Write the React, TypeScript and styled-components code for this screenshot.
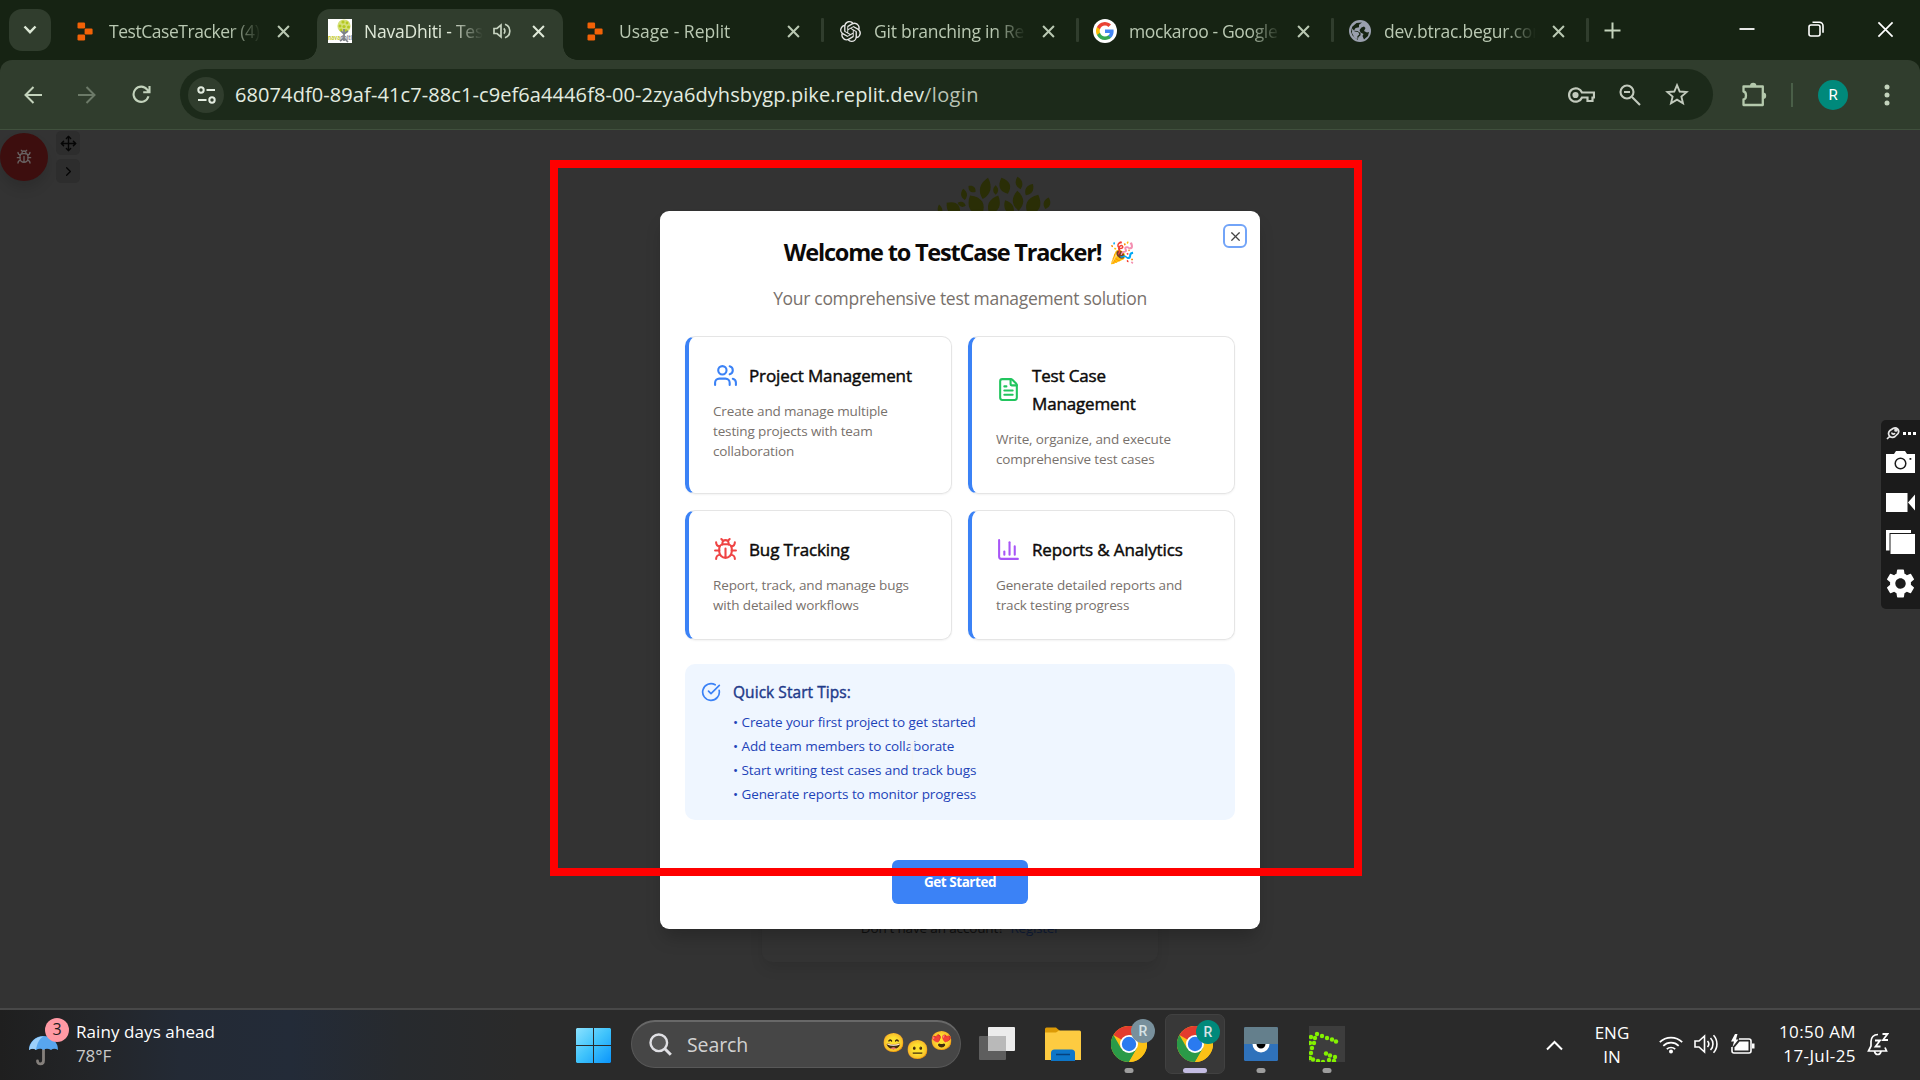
import React from 'react';
import styled, { createGlobalStyle, css } from 'styled-components';
import { Users, FileText, ChartColumn, CircleCheckBig, X, Move, ChevronRight } from 'lucide-react';

const GlobalStyle = createGlobalStyle`
  * { box-sizing: border-box; }
  html, body { margin: 0; padding: 0; background: #333; }
  body { font-family: "Open Sans", "Noto Sans", sans-serif; overflow: hidden; }
  svg { display: block; flex: none; }
`;

const Screen = styled.div`
  position: relative;
  width: 1920px;
  height: 1080px;
  display: flex;
  flex-direction: column;
  overflow: hidden;
`;

/* ---------- browser chrome ---------- */

const TabStrip = styled.div`
  height: 60px;
  flex: none;
  display: flex;
  padding: 9px 0 0 9px;
  background: #162313;
`;

const TabSearch = styled.div`
  width: 42px;
  height: 42px;
  margin-right: 11px;
  border-radius: 13px;
  background: #303d2d;
  display: grid;
  place-items: center;
`;

const Tab = styled.div<{ $active?: boolean }>`
  position: relative;
  width: 246px;
  height: 51px;
  padding: 0 18px 7px 11px;
  display: flex;
  align-items: center;
  color: ${p => (p.$active ? '#dfe9d8' : '#b9c8b2')};
  ${p => p.$active && css`
    background: #303d2d;
    border-radius: 13px 13px 0 0;
    &::before, &::after {
      content: '';
      position: absolute;
      bottom: 0;
      width: 14px;
      height: 14px;
    }
    &::before { left: -14px; background: radial-gradient(circle at 0 0, transparent 13.5px, #303d2d 14px); }
    &::after { right: -14px; background: radial-gradient(circle at 100% 0, transparent 13.5px, #303d2d 14px); }
  `}
`;

const Favicon = styled.div`
  width: 24px;
  height: 24px;
  display: grid;
  place-items: center;
  margin-right: 12px;
  flex: none;
`;

const TabTitle = styled.div<{ $width: number; $spacing: number }>`
  width: ${p => p.$width}px;
  flex: none;
  font-size: 17.5px;
  line-height: 26px;
  letter-spacing: ${p => p.$spacing}px;
  white-space: nowrap;
  overflow: hidden;
  mask-image: linear-gradient(90deg, #000 calc(100% - 32px), transparent);
`;

const TabAudio = styled.div`
  margin-left: 10px;
`;

const TabClose = styled.div`
  margin-left: auto;
  width: 13px;
`;

const TabDivider = styled.div<{ $visible: boolean }>`
  width: 3px;
  height: 24px;
  margin: 9px 3px 0;
  border-radius: 1px;
  background: ${p => (p.$visible ? '#303d2d' : 'transparent')};
`;

const NewTab = styled.div`
  padding: 13px 0 0 12px;
`;

const WindowButtons = styled.div`
  margin-left: auto;
  height: 42px;
  display: flex;
  align-items: center;
  gap: 53px;
  padding: 0 26px 2px 0;
`;

const Toolbar = styled.div`
  height: 70px;
  flex: none;
  display: flex;
  align-items: center;
  background: #303d2d;
  border-bottom: 1px solid #40503d;
  border-radius: 12px 12px 0 0;
`;

const ToolbarBack = styled.div`
  flex: none;
  background: #162313;
`;

const NavButtons = styled.div`
  width: 180px;
  padding-left: 24px;
  display: flex;
  align-items: center;
  gap: 36px;
`;

const Omnibox = styled.div`
  width: 1533px;
  height: 51px;
  border-radius: 26px;
  padding: 0 24px 0 8px;
  background: #1c2a1a;
  display: flex;
  align-items: center;
`;

const SiteInfo = styled.div`
  width: 36px;
  height: 36px;
  border-radius: 50%;
  background: #303d2d;
  display: grid;
  place-items: center;
  margin-right: 11px;
`;

const Url = styled.div`
  font-size: 20px;
  line-height: 28px;
  letter-spacing: 0.09px;
  color: #e3ece0;
  flex: 1;
  padding-top: 1px;
`;

const UrlPath = styled.span`
  color: #b9c3b4;
  letter-spacing: 0.35px;
`;

const OmniboxActions = styled.div`
  display: flex;
  align-items: center;
  gap: 24px;
`;

const ToolbarActions = styled.div`
  flex: 1;
  display: flex;
  align-items: center;
  padding-left: 28px;
`;

const ToolbarRule = styled.div`
  width: 2px;
  height: 24px;
  margin: 0 25px 0 23px;
  background: #4a5f48;
`;

const Avatar = styled.div`
  width: 30px;
  height: 30px;
  border-radius: 50%;
  background: #00897b;
  color: #fff;
  font: 15px/30px Roboto, sans-serif;
  text-align: center;
  margin-right: 36px;
`;

/* ---------- dimmed page ---------- */

const Page = styled.main`
  position: relative;
  flex: 1;
  display: flex;
  flex-direction: column;
  align-items: center;
  padding: 45px 0 46px;
  background: #333;
`;

const LogoArea = styled.div`
  margin-left: 70px;
`;

const LoginCard = styled.section`
  width: 396px;
  height: 320px;
  margin-top: auto;
  padding-bottom: 24px;
  border-radius: 10px;
  background: #333;
  box-shadow: 0 7px 14px -1px rgba(0, 0, 0, 0.11);
  display: flex;
  align-items: flex-end;
  justify-content: center;
`;

const RegisterLine = styled.div`
  font-size: 13.5px;
  line-height: 20px;
  letter-spacing: -0.14px;
  color: #101010;
  white-space: pre;
`;

const RegisterLink = styled.span`
  color: #0f1c38;
  letter-spacing: -0.3px;
`;

const BugWidget = styled.div`
  position: absolute;
  left: 0;
  top: 1px;
  display: flex;
  gap: 8px;
`;

const BugFab = styled.div`
  width: 48px;
  height: 48px;
  margin-top: 2px;
  border-radius: 50%;
  background: #3d0e0e;
  color: #686262;
  display: grid;
  place-items: center;
  box-shadow: 0 8px 12px rgba(0, 0, 0, 0.12);
`;

const MiniButtons = styled.div`
  display: flex;
  flex-direction: column;
  gap: 4px;
`;

const MiniButton = styled.div`
  width: 24px;
  height: 24px;
  border-radius: 5px;
  background: #2d2d2d;
  color: #050505;
  display: grid;
  place-items: center;
`;

/* ---------- welcome dialog ---------- */

const Dialog = styled.div`
  position: absolute;
  left: 660px;
  top: 81px;
  width: 600px;
  height: 718px;
  padding: 26px 25px 25px;
  background: #fff;
  border-radius: 9px;
  box-shadow: 0 12px 18px -4px rgba(0, 0, 0, 0.22);
  display: flex;
  flex-direction: column;
`;

const CloseButton = styled.button`
  position: absolute;
  right: 13px;
  top: 13px;
  width: 24px;
  height: 24px;
  padding: 0;
  border: 2px solid #72a4f8;
  border-radius: 6px;
  background: #fff;
  color: #444;
  display: grid;
  place-items: center;
`;

const Title = styled.h2`
  margin: 0 0 17px;
  display: flex;
  justify-content: center;
  align-items: center;
  font-size: 23.5px;
  line-height: 31px;
  font-weight: 700;
  letter-spacing: -1.2px;
  color: #0c0a09;
`;

const Party = styled.span`
  margin: 0 1px 0 8px;
  font-size: 21px;
  letter-spacing: 0;
`;

const Subtitle = styled.p`
  margin: 0 0 25px;
  text-align: center;
  font-size: 17.5px;
  line-height: 26px;
  letter-spacing: -0.31px;
  color: #78716c;
`;

const CardGrid = styled.div`
  display: grid;
  grid-template-columns: 267px 267px;
  grid-template-rows: 158px 130px;
  gap: 16px;
`;

const Card = styled.article`
  padding: 24.5px 20px 0 24px;
  border: 1px solid #e5e5e5;
  border-left: 4px solid #3b82f6;
  border-radius: 10px;
  box-shadow: 0 1px 2px rgba(0, 0, 0, 0.05);
`;

const CardHead = styled.div<{ $color: string }>`
  display: flex;
  align-items: center;
  gap: 11.5px;
  margin: 0 0 11.5px -0.5px;
  svg { color: ${p => p.$color}; }
`;

const CardTitle = styled.h3<{ $spacing: number }>`
  margin: 0;
  font-size: 17px;
  line-height: 28px;
  font-weight: 400;
  letter-spacing: ${p => p.$spacing}px;
  white-space: pre-line;
  color: #0c0a09;
  -webkit-text-stroke: 0.45px #0c0a09;
`;

const CardText = styled.p`
  margin: 0;
  font-size: 13.5px;
  line-height: 20px;
  letter-spacing: -0.14px;
  white-space: pre-line;
  color: #78716c;
`;

const Tips = styled.section`
  height: 156px;
  margin-top: 24px;
  padding: 16px;
  border-radius: 10px;
  background: #eff6ff;
  display: flex;
  gap: 12px;
  svg { color: #3b82f6; margin-top: 2px; }
`;

const TipsTitle = styled.h4`
  margin: 0 0 6px;
  font-size: 15.5px;
  line-height: 24px;
  font-weight: 400;
  letter-spacing: 0.05px;
  color: #1e3a8a;
  -webkit-text-stroke: 0.4px #1e3a8a;
`;

const Tip = styled.div`
  font-size: 13.5px;
  line-height: 24px;
  letter-spacing: -0.1px;
  word-spacing: 0.1px;
  color: #1d43b8;
`;

const StartButton = styled.button`
  align-self: center;
  margin-top: auto;
  width: 136px;
  height: 44px;
  padding: 0;
  border: 0;
  border-radius: 6px;
  background: #3b82f6;
  color: #fff;
  font: 700 13.5px/44px "Open Sans", sans-serif;
  letter-spacing: -0.46px;
`;

const RedFrame = styled.div`
  position: absolute;
  left: 550px;
  top: 30px;
  width: 812px;
  height: 716px;
  border: 8px solid #f00;
`;

const TextCursor = styled.div`
  position: absolute;
  left: 907px;
  top: 611px;
`;

const CapturePanel = styled.aside`
  position: absolute;
  right: 0;
  top: 290px;
  width: 39px;
  height: 189px;
  padding: 6px 5px 11px;
  border-radius: 5px 0 0 5px;
  background: #1b1b1b;
  display: flex;
  flex-direction: column;
`;

const PanelTop = styled.div`
  display: flex;
  align-items: center;
  gap: 3px;
`;

const PanelItem = styled.div<{ $gap: number }>`
  margin-top: ${p => p.$gap}px;
`;

/* ---------- taskbar ---------- */

const Taskbar = styled.footer`
  height: 72px;
  flex: none;
  display: flex;
  align-items: center;
  border-top: 2px solid #484848;
  background: linear-gradient(90deg, #1f1f1f 0, #232528 90px, #232a35 180px, #232b38 290px, #272a2e 400px, #2a2a2a 520px);
  color: #fff;
`;

const Weather = styled.div`
  width: 576px;
  display: flex;
  align-items: center;
  padding-left: 28px;
`;

const WeatherIcon = styled.div`
  position: relative;
  width: 48px;
  height: 42px;
  padding-top: 12px;
`;

const WeatherBadge = styled.div`
  position: absolute;
  left: 17px;
  top: -6px;
  width: 24px;
  height: 24px;
  border-radius: 50%;
  background: #ff99a4;
  color: #1c1c1c;
  font-size: 16px;
  line-height: 23px;
  text-align: center;
`;

const TwoLines = styled.div<{ $align?: string; $spacing?: number }>`
  font-size: 17px;
  line-height: 24px;
  letter-spacing: ${p => p.$spacing ?? 0}px;
  text-align: ${p => p.$align ?? 'left'};
  padding-bottom: 3px;
  white-space: nowrap;
`;

const Dim = styled.div`
  color: #c9c9c9;
  letter-spacing: -0.1px;
`;

const SearchPill = styled.div`
  width: 330px;
  height: 48px;
  margin: 0 3px 2px 20px;
  padding: 0 8px 0 17px;
  border: 1px solid #585858;
  border-top: 2px solid #686868;
  border-radius: 24px;
  background: #464646;
  display: flex;
  align-items: center;
`;

const SearchText = styled.div`
  flex: 1;
  padding-left: 15px;
  font-size: 19.5px;
  letter-spacing: -0.1px;
  color: #d2d2d2;
`;

const Faces = styled.div`
  display: flex;
  gap: 3px;
`;

const Face = styled.span<{ $drop: number }>`
  width: 21px;
  margin-top: ${p => p.$drop}px;
  font-size: 18.5px;
  line-height: 22px;
  display: flex;
  justify-content: center;
`;

const AppSlot = styled.div<{ $active?: boolean }>`
  position: relative;
  width: 60px;
  height: 60px;
  margin: 0 3px 2px;
  border-radius: 7px;
  display: flex;
  align-items: center;
  justify-content: center;
  ${p => p.$active && css`
    background: #383838;
    border: 1px solid #414141;
  `}
`;

const RunMark = styled.div<{ $active?: boolean }>`
  position: absolute;
  bottom: ${p => (p.$active ? 0 : 1)}px;
  left: 50%;
  transform: translateX(-50%);
  width: ${p => (p.$active ? 24 : 9)}px;
  height: 5px;
  border-radius: 3px;
  background: ${p => (p.$active ? '#c3bce2' : '#9d9d9d')};
`;

const ProfileBadge = styled.div<{ $color: string }>`
  position: absolute;
  right: 4px;
  top: 5px;
  width: 24px;
  height: 24px;
  border-radius: 50%;
  background: ${p => p.$color};
  color: #d7e3e6;
  font: 500 14px/24px Roboto, sans-serif;
  text-align: center;
`;

const Tray = styled.div`
  margin-left: auto;
  padding-right: 31px;
  display: flex;
  align-items: center;
`;

const Language = styled.div`
  width: 92px;
  margin: 3px 1px 0 3px;
`;

const TrayIcons = styled.div`
  display: flex;
  gap: 11px;
  align-items: center;
  margin-right: 24px;
  padding-bottom: 2px;
`;

const BellWrap = styled.div`
  margin-left: 11px;
  padding-bottom: 2px;
`;

/* ---------- icons ---------- */

const Cross = ({ size, w, color = 'currentColor' }: { size: number; w: number; color?: string }) => (
  <svg width={size} height={size} viewBox="0 0 12 12" stroke={color} strokeWidth={w} fill="none">
    <path d="M1 1l10 10M11 1L1 11" />
  </svg>
);

const ReplitIcon = () => (
  <svg width="16" height="19" viewBox="0 0 16 19" fill="#f26207">
    <rect x="0.5" y="0.5" width="7.6" height="6" rx="1.2" />
    <rect x="7.6" y="6.5" width="8" height="6" rx="1.2" />
    <rect x="0.5" y="12.5" width="7.6" height="6" rx="1.2" />
  </svg>
);

const NavaIcon = () => (
  <svg width="24" height="24" viewBox="0 0 24 24">
    <rect width="24" height="24" fill="#fff" />
    <circle cx="16" cy="7" r="6.6" fill="#d5e07a" />
    <g fill="#b4c820">
      <circle cx="12" cy="7" r="1.5" /><circle cx="15" cy="3" r="1.6" /><circle cx="19" cy="4" r="1.4" />
      <circle cx="16" cy="7.5" r="1.6" /><circle cx="20.5" cy="8" r="1.5" /><circle cx="13" cy="11" r="1.5" /><circle cx="18" cy="11.4" r="1.5" />
    </g>
    <path d="M16 10v12M16 15l-3-3M16 15l4-3M12 22l4-3 4 4" stroke="#7c8087" strokeWidth="1.7" fill="none" />
    <text x="0" y="20.5" fontSize="7.4" fontWeight="700" fontFamily="Open Sans" fill="#c3c92c" textLength="24" lengthAdjust="spacingAndGlyphs">nava<tspan fill="#83868f">dhiti</tspan></text>
  </svg>
);

const OpenAiIcon = () => (
  <svg width="21" height="21" viewBox="0 0 24 24" fill="#e6e6e6">
    <path d="M22.2819 9.8211a5.9847 5.9847 0 0 0-.5157-4.9108 6.0462 6.0462 0 0 0-6.5098-2.9A6.0651 6.0651 0 0 0 4.9807 4.1818a5.9847 5.9847 0 0 0-3.9977 2.9 6.0462 6.0462 0 0 0 .7427 7.0966 5.98 5.98 0 0 0 .511 4.9107 6.051 6.051 0 0 0 6.5146 2.9001A5.9847 5.9847 0 0 0 13.2599 24a6.0557 6.0557 0 0 0 5.7718-4.2058 5.9894 5.9894 0 0 0 3.9977-2.9001 6.0557 6.0557 0 0 0-.7475-7.0729zm-9.022 12.6081a4.4755 4.4755 0 0 1-2.8764-1.0408l.1419-.0804 4.7783-2.7582a.7948.7948 0 0 0 .3927-.6813v-6.7369l2.02 1.1686a.071.071 0 0 1 .038.052v5.5826a4.504 4.504 0 0 1-4.4945 4.4944zm-9.6607-4.1254a4.4708 4.4708 0 0 1-.5346-3.0137l.142.0852 4.783 2.7582a.7712.7712 0 0 0 .7806 0l5.8428-3.3685v2.3324a.0804.0804 0 0 1-.0332.0615L9.74 19.9502a4.4992 4.4992 0 0 1-6.1408-1.6464zM2.3408 7.8956a4.485 4.485 0 0 1 2.3655-1.9728V11.6a.7664.7664 0 0 0 .3879.6765l5.8144 3.3543-2.0201 1.1685a.0757.0757 0 0 1-.071 0l-4.8303-2.7865A4.504 4.504 0 0 1 2.3408 7.872zm16.5963 3.8558L13.1038 8.364 15.1192 7.2a.0757.0757 0 0 1 .071 0l4.8303 2.7913a4.4944 4.4944 0 0 1-.6765 8.1042v-5.6772a.79.79 0 0 0-.407-.667zm2.0107-3.0231l-.142-.0852-4.7735-2.7818a.7759.7759 0 0 0-.7854 0L9.409 9.2297V6.8974a.0662.0662 0 0 1 .0284-.0615l4.8303-2.7866a4.4992 4.4992 0 0 1 6.6802 4.66zM8.3065 12.863l-2.02-1.1638a.0804.0804 0 0 1-.038-.0567V6.0742a4.4992 4.4992 0 0 1 7.3757-3.4537l-.142.0805L8.704 5.459a.7948.7948 0 0 0-.3927.6813zm1.0976-2.3654l2.602-1.4998 2.6069 1.4998v2.9994l-2.5974 1.4997-2.6067-1.4997Z" />
  </svg>
);

const GoogleIcon = () => (
  <svg width="24" height="24" viewBox="0 0 24 24">
    <circle cx="12" cy="12" r="12" fill="#fff" />
    <g transform="translate(3 3) scale(.75)">
      <path fill="#4285F4" d="M23.5 12.3c0-.8-.1-1.6-.2-2.3H12v4.5h6.5a5.5 5.5 0 0 1-2.4 3.6v3h3.9c2.200-2.100 3.500-5.200 3.500-8.800z" />
      <path fill="#34A853" d="M12 24c3.200 0 6-1.100 8-2.900l-3.900-3c-1.100.7-2.500 1.200-4.100 1.200-3.100 0-5.800-2.100-6.700-5H1.300v3.100A12 12 0 0 0 12 24z" />
      <path fill="#FBBC05" d="M5.300 14.300a7.200 7.200 0 0 1 0-4.600V6.600H1.300a12 12 0 0 0 0 10.800z" />
      <path fill="#EA4335" d="M12 4.800c1.800 0 3.300.6 4.600 1.800l3.400-3.400A12 12 0 0 0 1.300 6.600l4 3.100c.9-2.900 3.600-4.900 6.700-4.900z" />
    </g>
  </svg>
);

const GlobeIcon = () => (
  <svg width="22" height="22" viewBox="0 0 22 22">
    <circle cx="11" cy="11" r="11" fill="#9aa0ae" />
    <path d="M13 2.500l-3 2.200v2.600l-3.400.8-1.800 2.600 3.700.4 3 1.800v2.300l-2 1.800-.8 3L3.500 15.500 2 11.800l1.200-5L7.500 3z" fill="#162313" />
    <path d="M12.500 7.500l2.500-1 1.500 1.500-1.500 3 3 1.500 2-.5-1 4-4 3.500-1.500-3.500 1-2-3-1.500-1-2.500z" fill="#162313" />
    <path d="M3.200 8.500l2.500 3 3.500.6 1.200 2.200-2 2 .2 3.200-3.200-2L3 13z" fill="#9aa0ae" />
  </svg>
);

const AudioIcon = () => (
  <svg width="18" height="18" viewBox="0 0 18 18" fill="none" stroke="#c6d3c0" strokeWidth="1.700">
    <path d="M1 6.500h3L8 3v12l-4-3.500H1z" />
    <path d="M10.800 6.300a3.800 3.800 0 0 1 0 5.400M12 2.200a7.200 7.200 0 0 1 0 13.600" />
  </svg>
);

const BugIcon = ({ size }: { size: number }) => (
  <svg width={size} height={size} viewBox="0 0 24 24" fill="none" stroke="currentColor" strokeWidth="2" strokeLinecap="round" strokeLinejoin="round">
    <path d="m8 2 1.880 1.880M14.120 3.880 16 2M9 7.130v-1a3.003 3.003 0 1 1 6 0v1" />
    <path d="M12 20c-3.300 0-6-2.700-6-6v-3a4 4 0 0 1 4-4h4a4 4 0 0 1 4 4v3c0 3.300-2.700 6-6 6M12 20v-9" />
    <path d="M6.530 9C4.600 8.800 3 7.100 3 5M6 13H2M3 21c0-2.100 1.700-3.900 3.800-4M20.970 5c0 2.100-1.600 3.800-3.500 4M22 13h-4M17.200 17c2.100.1 3.800 1.900 3.800 4" />
  </svg>
);

const leaves = [
  [286, 70, 66, 32, 14], [344, 62, 52, 32, -22], [387, 54, 38, 20, -14], [418, 74, 40, 22, 32],
  [317, 75, 28, 15, 0], [246, 72, 28, 18, -48], [222, 88, 34, 18, -8], [258, 120, 68, 44, -32],
  [312, 120, 62, 34, 24], [384, 107, 60, 32, -4], [357, 128, 50, 26, -28], [430, 120, 68, 42, 26],
  [471, 115, 36, 20, 16], [215, 118, 26, 15, -70], [190, 130, 52, 36, -50], [150, 134, 32, 14, -10],
];

const LeafCrown = () => (
  <svg width="130" height="48" viewBox="120 30 390 144" fill="#2a2e06">
    {leaves.map(([x, y, l, w, r], i) => (
      <path key={i} transform={`translate(${x} ${y}) rotate(${r})`}
        d={`M0 ${-l / 2}C${w * 0.65} ${-l * 0.16} ${w * 0.65} ${l * 0.2} 0 ${l / 2}C${-w * 0.65} ${l * 0.2} ${-w * 0.65} ${-l * 0.16} 0 ${-l / 2}Z`} />
    ))}
  </svg>
);

const ChromeIcon = () => (
  <svg width="36" height="36" viewBox="0 0 36 36">
    <circle cx="18" cy="18" r="18" fill="#fbc116" />
    <path d="M18 18L2.400 9A18 18 0 0 1 33.600 9L18 9.500z" fill="#e33b2e" />
    <path d="M2.400 9A18 18 0 0 0 18 36L26 22.500 18 18 10.200 22.500z" fill="#2a9a48" />
    <path d="M33.600 9H18l7.800 13.500L18 36A18 18 0 0 0 33.600 9z" fill="#fbc116" />
    <circle cx="18" cy="18" r="9" fill="#fff" />
    <circle cx="18" cy="18" r="7.200" fill="#2a7af0" />
  </svg>
);

const ChromeApp = ({ color, active }: { color: string; active?: boolean }) => (
  <AppSlot $active={active}>
    <ChromeIcon />
    <ProfileBadge $color={color}>R</ProfileBadge>
    <RunMark $active={active} />
  </AppSlot>
);

const dots = [[2, 11], [8, 8], [13, 10], [18, 12], [23, 13.500], [27, 15.500], [6, 12], [5, 17], [3, 22], [2, 27], [1, 32], [4, 33.500], [9, 35], [17, 27.500], [21, 29.500], [26, 31], [20, 34], [25, 35], [1, 17], [14, 36]];

const tabs = [
  { title: 'TestCaseTracker (4)', icon: <ReplitIcon />, spacing: -0.45, divider: false },
  { title: 'NavaDhiti - Test', icon: <NavaIcon />, spacing: -0.22, divider: false, active: true },
  { title: 'Usage - Replit', icon: <ReplitIcon />, spacing: 0, divider: true },
  { title: 'Git branching in Rep', icon: <OpenAiIcon />, spacing: -0.25, divider: true },
  { title: 'mockaroo - Google S', icon: <GoogleIcon />, spacing: -0.36, divider: true },
  { title: 'dev.btrac.begur.com', icon: <GlobeIcon />, spacing: -0.22, divider: true },
];

const cards = [
  { title: 'Project Management', text: 'Create and manage multiple\ntesting projects with team\ncollaboration', color: '#3b82f6', spacing: -0.12, icon: <Users size={25} /> },
  { title: 'Test Case\nManagement', text: 'Write, organize, and execute\ncomprehensive test cases', color: '#22c55e', spacing: -0.15, icon: <FileText size={25} /> },
  { title: 'Bug Tracking', text: 'Report, track, and manage bugs\nwith detailed workflows', color: '#ef4444', spacing: -0.12, icon: <BugIcon size={25} /> },
  { title: 'Reports & Analytics', text: 'Generate detailed reports and\ntrack testing progress', color: '#a855f7', spacing: -0.12, icon: <ChartColumn size={25} /> },
];

const tips = [
  'Create your first project to get started',
  'Add team members to collaborate',
  'Start writing test cases and track bugs',
  'Generate reports to monitor progress',
];

export default function App() {
  return (
    <Screen>
      <GlobalStyle />
      <TabStrip>
        <TabSearch>
          <svg width="14" height="10" viewBox="0 0 14 10" fill="none" stroke="#dce8d6" strokeWidth="2.400"><path d="M1.500 1.500L7 7.200l5.500-5.700" /></svg>
        </TabSearch>
        {tabs.map(t => (
          <React.Fragment key={t.title}>
            <Tab $active={t.active}>
              <Favicon>{t.icon}</Favicon>
              <TabTitle $width={t.active ? 119 : 152} $spacing={t.spacing}>{t.title}</TabTitle>
              {t.active && <TabAudio><AudioIcon /></TabAudio>}
              <TabClose><Cross size={13} w={1.900} /></TabClose>
            </Tab>
            <TabDivider $visible={t.divider} />
          </React.Fragment>
        ))}
        <NewTab>
          <svg width="17" height="17" viewBox="0 0 17 17" stroke="#c3d3bc" strokeWidth="2"><path d="M8.500 0.500v16M0.500 8.500h16" /></svg>
        </NewTab>
        <WindowButtons>
          <svg width="16" height="16" viewBox="0 0 16 16" stroke="#fff" strokeWidth="1.800"><path d="M0.500 8h15" /></svg>
          <svg width="16" height="16" viewBox="0 0 16 16" stroke="#fff" strokeWidth="1.600" fill="none"><rect x="1" y="4" width="11" height="11" rx="2" /><path d="M4.500 1.200h7a3.500 3.500 0 0 1 3.500 3.500v7" /></svg>
          <Cross size={17} w={1.200} color="#fff" />
        </WindowButtons>
      </TabStrip>
      <ToolbarBack>
        <Toolbar>
          <NavButtons>
            <svg width="18" height="18" viewBox="0 0 18 18" fill="none" stroke="#c3d3bc" strokeWidth="2"><path d="M18 9H1.500M9.500 1L1.500 9l8 8" /></svg>
            <svg width="18" height="18" viewBox="0 0 18 18" fill="none" stroke="#6c7a68" strokeWidth="2"><path d="M0 9h16.500M8.500 1l8 8-8 8" /></svg>
            <svg width="19" height="19" viewBox="0 0 19 19" fill="none" stroke="#c3d3bc" strokeWidth="2.100"><path d="M16.500 11.300A7.600 7.600 0 1 1 15.200 4.600L17 7M17.500 1v6.300h-6.300" /></svg>
          </NavButtons>
          <Omnibox>
            <SiteInfo>
              <svg width="19" height="18" viewBox="0 0 19 18" fill="none" stroke="#e3ece0" strokeWidth="2"><circle cx="4" cy="4" r="2.700" /><path d="M9.500 4H18M1 14h8.500" /><circle cx="15" cy="14" r="2.700" /></svg>
            </SiteInfo>
            <Url>68074df0-89af-41c7-88c1-c9ef6a4446f8-00-2zya6dyhsbygp.pike.replit.dev<UrlPath>/login</UrlPath></Url>
            <OmniboxActions>
              <svg width="28" height="18" viewBox="0 0 28 18" fill="none" stroke="#c2cabd" strokeWidth="2.200"><path d="M15 6.500H27v5h-1.500V15h-5v-3.500H15A6.700 6.700 0 1 1 15 6.500z" /><circle cx="8.500" cy="9" r="2" fill="#c2cabd" /></svg>
              <svg width="22" height="22" viewBox="0 0 22 22" fill="none" stroke="#c2cabd" strokeWidth="2.100"><circle cx="8" cy="8" r="6.500" /><path d="M13 13l8 8M5 8h6" /></svg>
              <svg width="24" height="23" viewBox="0 0 24 23" fill="none" stroke="#c2cabd" strokeWidth="1.900"><path d="M12 2.200l2.700 6.300 6.900.6-5.200 4.500 1.600 6.700-6-3.600-6 3.600 1.600-6.700L2.400 9.100l6.900-.6z" /></svg>
            </OmniboxActions>
          </Omnibox>
          <ToolbarActions>
            <svg width="27" height="26" viewBox="0 0 27 26" fill="none" stroke="#b4c9ac" strokeWidth="2.300">
              <path d="M2.500 4.500h19.300V23H2.500v-5.500c3.300-.6 3.300-7.400 0-8z" strokeLinejoin="round" />
              <path d="M9 4a3.200 3.200 0 0 1 6.400 0zM22 10.500a3.200 3.200 0 0 1 0 6.400z" fill="#b4c9ac" stroke="none" />
            </svg>
            <ToolbarRule />
            <Avatar>R</Avatar>
            <svg width="6" height="22" viewBox="0 0 6 22" fill="#c3d3bc"><circle cx="3" cy="3" r="2.500" /><circle cx="3" cy="11" r="2.500" /><circle cx="3" cy="19" r="2.500" /></svg>
          </ToolbarActions>
        </Toolbar>
      </ToolbarBack>

      <Page>
        <LogoArea><LeafCrown /></LogoArea>
        <LoginCard>
          <RegisterLine>{"Don't have an account?  "}<RegisterLink>Register</RegisterLink></RegisterLine>
        </LoginCard>
        <BugWidget>
          <BugFab><BugIcon size={16} /></BugFab>
          <MiniButtons>
            <MiniButton><Move size={17} /></MiniButton>
            <MiniButton><ChevronRight size={15} /></MiniButton>
          </MiniButtons>
        </BugWidget>

        <Dialog>
          <CloseButton><X size={15} strokeWidth={1.900} /></CloseButton>
          <Title>Welcome to TestCase Tracker! <Party>🎉</Party></Title>
          <Subtitle>Your comprehensive test management solution</Subtitle>
          <CardGrid>
            {cards.map(c => (
              <Card key={c.title}>
                <CardHead $color={c.color}>
                  {c.icon}
                  <CardTitle $spacing={c.spacing}>{c.title}</CardTitle>
                </CardHead>
                <CardText>{c.text}</CardText>
              </Card>
            ))}
          </CardGrid>
          <Tips>
            <CircleCheckBig size={20} />
            <div>
              <TipsTitle>Quick Start Tips:</TipsTitle>
              {tips.map(t => <Tip key={t}>• {t}</Tip>)}
            </div>
          </Tips>
          <StartButton>Get Started</StartButton>
        </Dialog>

        <RedFrame />
        <TextCursor>
          <svg width="11" height="27" viewBox="0 0 11 27" fill="none">
            <path d="M5.500 2v11" stroke="#eff6ff" strokeWidth="4" />
            <path d="M1 1.500h3.500l1 1 1-1H10M5.500 2v23M1 25.500h3.500l1-1 1 1H10" stroke="#f3f4f1" strokeWidth="1.500" />
          </svg>
        </TextCursor>
        <CapturePanel>
          <PanelTop>
            <svg width="14" height="14" viewBox="0 0 14 14" fill="none" stroke="#e8e8e8" strokeWidth="1.700"><path d="M1 13l3-3M3.500 10A3.800 3.800 0 0 1 4 4.500L7 2.500a3.600 3.600 0 0 1 5 5L9 10.500A3.800 3.800 0 0 1 3.500 10zM5.800 6.500c0 2 2.500 2 3 .5" /><circle cx="10" cy="4" r="1" /></svg>
            <svg width="13" height="3" viewBox="0 0 13 3" fill="#fff"><path d="M0 0h3v3H0zM5 0h3v3H5zM10 0h3v3h-3z" /></svg>
          </PanelTop>
          <PanelItem $gap={11}>
            <svg width="29" height="22" viewBox="0 0 29 22"><path d="M0 3h8l2-3h9l2 3h8v19H0z" fill="#fff" /><circle cx="14.500" cy="12.500" r="5.300" fill="none" stroke="#1b1b1b" strokeWidth="1.500" /><rect x="23.500" y="7" width="1.800" height="1.800" fill="#1b1b1b" /></svg>
          </PanelItem>
          <PanelItem $gap={20}>
            <svg width="29" height="19" viewBox="0 0 29 19" fill="#fff"><path d="M0 0h21.500v19H0zM22 9.500L29 1.500v16z" /></svg>
          </PanelItem>
          <PanelItem $gap={18}>
            <svg width="29" height="24" viewBox="0 0 29 24" fill="#fff"><path d="M0 0h25v3H3.500v17.500H0zM4.500 4H29v20H4.500z" /></svg>
          </PanelItem>
          <PanelItem $gap={15}>
            <svg width="29" height="29" viewBox="2 2 20 20" fill="#fff"><path d="M19.140 12.940c.04-.3.060-.61.060-.94s-.02-.64-.07-.94l2.030-1.580a.49.49 0 0 0 .12-.61l-1.920-3.320a.488.488 0 0 0-.59-.22l-2.390.96c-.5-.38-1.030-.7-1.620-.94l-.36-2.540a.484.484 0 0 0-.48-.41h-3.840c-.24 0-.43.17-.47.41l-.36 2.540c-.59.24-1.130.57-1.620.94l-2.390-.96a.488.488 0 0 0-.59.22L2.740 8.870c-.12.21-.08.47.12.61l2.030 1.580c-.05.3-.09.63-.09.94s.02.64.07.94l-2.030 1.580a.49.49 0 0 0-.12.61l1.920 3.320c.12.22.37.29.59.22l2.390-.96c.5.38 1.030.7 1.620.94l.36 2.540c.05.24.24.41.48.41h3.840c.24 0 .44-.17.47-.41l.36-2.540c.59-.24 1.130-.56 1.620-.94l2.390.96c.22.08.47 0 .59-.22l1.920-3.320c.12-.22.07-.47-.12-.61l-2.010-1.580zM12 15.600A3.610 3.610 0 0 1 8.400 12c0-1.980 1.620-3.600 3.600-3.600s3.600 1.620 3.600 3.600-1.620 3.600-3.600 3.600z" /></svg>
          </PanelItem>
        </CapturePanel>
      </Page>

      <Taskbar>
        <Weather>
          <WeatherIcon>
            <svg width="31" height="30" viewBox="0 0 31 30">
              <path d="M15.500 12v12.500c0 4.500-6 4.500-6 .5" stroke="#85807c" strokeWidth="2.800" fill="none" strokeLinecap="round" />
              <path d="M1 14A14.500 14 0 0 1 30 14c-2.500-1.800-5-1.800-7 0-2.500-1.800-5.500-1.800-7.500 0-2-1.800-5-1.800-7.500 0-2-1.800-4.500-1.800-7 0z" fill="#58a6ee" />
              <path d="M8 14C9 7 12 2 15.500 0.500 9 0 2 5 1 14c2.500-1.800 5-1.800 7 0z" fill="#9dd0fa" />
            </svg>
            <WeatherBadge>3</WeatherBadge>
          </WeatherIcon>
          <TwoLines $spacing={0.08}>Rainy days ahead<Dim>78°F</Dim></TwoLines>
        </Weather>
        <svg width="35" height="35" viewBox="0 0 35 35">
          <defs><linearGradient id="win" x1="0" y1="0" x2="35" y2="35" gradientUnits="userSpaceOnUse"><stop offset="0" stopColor="#8be2ff" /><stop offset=".5" stopColor="#3fc3fb" /><stop offset="1" stopColor="#0a94fb" /></linearGradient></defs>
          <path d="M1 0h16v17H0V1zM18 0h16l1 1v16H18zM0 18h17v17H1l-1-1zM18 18h17v16l-1 1H18z" fill="url(#win)" />
        </svg>
        <SearchPill>
          <svg width="23" height="23" viewBox="0 0 23 23" fill="none" stroke="#e0e0e4" strokeWidth="2.400"><circle cx="9.800" cy="9.800" r="8.300" fill="#585858" /><path d="M15.800 15.800l6 6" strokeWidth="3" /></svg>
          <SearchText>Search</SearchText>
          <Faces><Face $drop={1}>😄</Face><Face $drop={8}>😐</Face><Face $drop={-1}>😍</Face></Faces>
        </SearchPill>
        <AppSlot>
          <svg width="36" height="34" viewBox="0 0 36 34">
            <rect x="0" y="9" width="27" height="24" rx="1" fill="#5e5e5e" />
            <rect x="9" y="0" width="27" height="24" rx="1" fill="#ececec" />
            <rect x="9" y="9" width="18" height="15" fill="#b9b9b9" />
          </svg>
        </AppSlot>
        <AppSlot>
          <svg width="36" height="34" viewBox="0 0 36 34">
            <path d="M0 2q0-1.500 1.500-1.500h9.500l4 3.500v6H0z" fill="#dc9a06" />
            <path d="M0 5.500h11l3-2h20.500q1.500 0 1.500 1.500v28H0z" fill="#fdcb41" />
            <path d="M6 34V26q0-3.500 3.500-3.500h17Q30 22.500 30 26v8z" fill="#0d76c8" />
            <path d="M11 27.500h14" stroke="#06417d" strokeWidth="1.500" />
          </svg>
        </AppSlot>
        <ChromeApp color="#78909c" />
        <ChromeApp color="#00897b" active />
        <AppSlot>
          <svg width="34" height="34" viewBox="0 0 34 34">
            <rect width="34" height="34" rx="1.500" fill="#2f72bb" />
            <path d="M0 1.500Q0 0 1.500 0h31Q34 0 34 1.500V17H0z" fill="#647f8c" />
            <path d="M8.500 17a8.500 8.500 0 0 0 17 0z" fill="#fff" />
            <path d="M12.500 17a4.500 4.500 0 0 0 9 0z" fill="#000" />
          </svg>
          <RunMark />
        </AppSlot>
        <AppSlot>
          <svg width="36" height="36" viewBox="0 0 36 36">
            <rect width="36" height="36" fill="#3d3d3d" />
            {dots.map(([x, y], i) => <circle key={i} cx={x} cy={y} r="2.200" fill="#84f200" />)}
          </svg>
          <RunMark />
        </AppSlot>
        <Tray>
          <svg width="17" height="11" viewBox="0 0 17 11" fill="none" stroke="#fff" strokeWidth="2"><path d="M1 9.500l7.500-7.500L16 9.500" /></svg>
          <Language><TwoLines $align="center">ENG<div>IN</div></TwoLines></Language>
          <TrayIcons>
            <svg width="24" height="19" viewBox="0 0 24 19" fill="none" stroke="#fff" strokeWidth="1.700"><path d="M.8 7.200a15.800 15.800 0 0 1 22.400 0M4.300 10.800a10.900 10.900 0 0 1 15.400 0M7.800 14.200a6 6 0 0 1 8.400 0" /><circle cx="12" cy="16.500" r="2" fill="#fff" stroke="none" /></svg>
            <svg width="25" height="20" viewBox="0 0 25 20" fill="none" stroke="#fff" strokeWidth="1.600"><path d="M1 7h4l5.500-5v16L5 13H1zM13.500 7a4.500 4.500 0 0 1 0 6M16.500 4a8.500 8.500 0 0 1 0 12M19.500 1.200a13 13 0 0 1 0 17.600" /></svg>
            <svg width="25" height="21" viewBox="0 0 25 21"><path d="M9 5h10q2 0 2 2v10q0 2-2 2H4q-2 0-2-2v-4" fill="none" stroke="#fff" strokeWidth="1.600" /><path d="M9.500 7.500H18.500v9H4.500v-3z" fill="#fff" /><path d="M22 9.500h2.500v5H22zM5 0L1 7.500h3L2.500 13 8.500 5.500H6L7.500 0z" fill="#fff" /></svg>
          </TrayIcons>
          <TwoLines $align="right" $spacing={0.4}>10:50 AM<div>17-Jul-25</div></TwoLines>
          <BellWrap>
            <svg width="22" height="23" viewBox="0 0 22 23" fill="none" stroke="#fff" strokeWidth="1.700">
              <path d="M11 1.500C6.500 1.500 4 4.500 4 8.500V13L1.500 18h18L18 14.500M7.500 18.500c1 4 5.500 4 6.500 0" />
              <path d="M8 7.500h5l-4.500 6h5M15.500 1h5l-4.500 6h5" strokeWidth="1.800" />
            </svg>
          </BellWrap>
        </Tray>
      </Taskbar>
    </Screen>
  );
}
